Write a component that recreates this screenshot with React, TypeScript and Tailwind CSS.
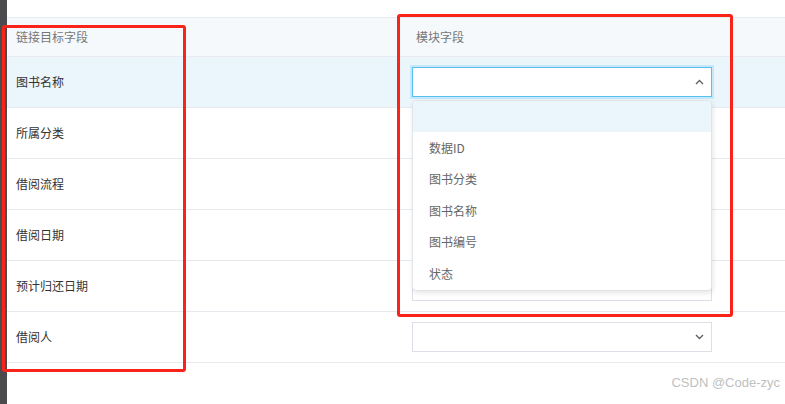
import React from "react";

const rows = ["图书名称", "所属分类", "借阅流程", "借阅日期", "预计归还日期", "借阅人"];
const options = ["", "数据ID", "图书分类", "图书名称", "图书编号", "状态"];

function Chevron({ up }: { up?: boolean }) {
  return (
    <svg width="9" height="6" viewBox="0 0 9 6" className="text-[#606266]">
      <path
        d={up ? "M1 5 L4.5 1.5 L8 5" : "M1 1 L4.5 4.5 L8 1"}
        fill="none"
        stroke="currentColor"
        strokeWidth="1.4"
      />
    </svg>
  );
}

function Select({ focused }: { focused?: boolean }) {
  return (
    <div
      className={
        focused
          ? "w-[300px] h-[30px] bg-white border border-[#5bbef0] ring-2 ring-[#c5e8fb] flex items-center justify-end pr-[7px]"
          : "w-[300px] h-[30px] bg-white border border-[#dcdfe6] flex items-center justify-end pr-[7px]"
      }
    >
      <Chevron up={focused} />
    </div>
  );
}

export default function App() {
  return (
    <div
      className="relative w-[785px] h-[404px] bg-white overflow-hidden flex"
      style={{ fontFamily: '"Noto Sans CJK SC", "Noto Sans", sans-serif' }}
    >
      <div className="w-[7px] bg-[#4b4b4d]" />
      <div className="flex-1 pt-[17px]">
        {/* header */}
        <div className="flex h-[40px] bg-[#f6f9fc] border-y border-[#e8ecf0] text-[12px] text-[#777]">
          <div className="w-[400px] pl-[9px] flex items-center">链接目标字段</div>
          <div className="flex-1 pl-[9px] flex items-center">模块字段</div>
        </div>
        {rows.map((name, i) => (
          <div
            key={name}
            className={
              i === 0
                ? "flex h-[51px] bg-[#eaf5fc] border-b border-[#e6eaee] text-[12px] text-[#333]"
                : "flex h-[51px] bg-white border-b border-[#e6eaee] text-[12px] text-[#333]"
            }
          >
            <div className="w-[400px] pl-[9px] flex items-center">{name}</div>
            <div className="flex-1 pl-[5px] flex items-center">
              <Select focused={i === 0} />
            </div>
          </div>
        ))}
      </div>

      {/* dropdown */}
      <div className="absolute left-[412px] top-[100px] w-[300px] bg-white border border-[#e1e4e8] rounded-[4px] shadow-[1px_2px_5px_rgba(0,0,0,0.1)] overflow-hidden">
        {options.map((o, i) => (
          <div
            key={i}
            className={
              i === 0
                ? "h-[31px] bg-[#eaf5fc]"
                : "h-[31.5px] pl-[16px] flex items-center text-[12px] text-[#666]"
            }
          >
            {o}
          </div>
        ))}
      </div>

      {/* annotation boxes */}
      <div className="absolute left-[2px] top-[25px] w-[184px] h-[347px] border-[3px] border-[#fa2319] rounded-[3px]" />
      <div className="absolute left-[397px] top-[14px] w-[336px] h-[303px] border-[3px] border-[#fa2319] rounded-[3px]" />

      <div
        className="absolute right-[5px] bottom-[12px] text-[13px] text-[#c0c0c0]"
        style={{ fontFamily: '"Liberation Sans", Arial, sans-serif' }}
      >
        CSDN @Code-zyc
      </div>
    </div>
  );
}
